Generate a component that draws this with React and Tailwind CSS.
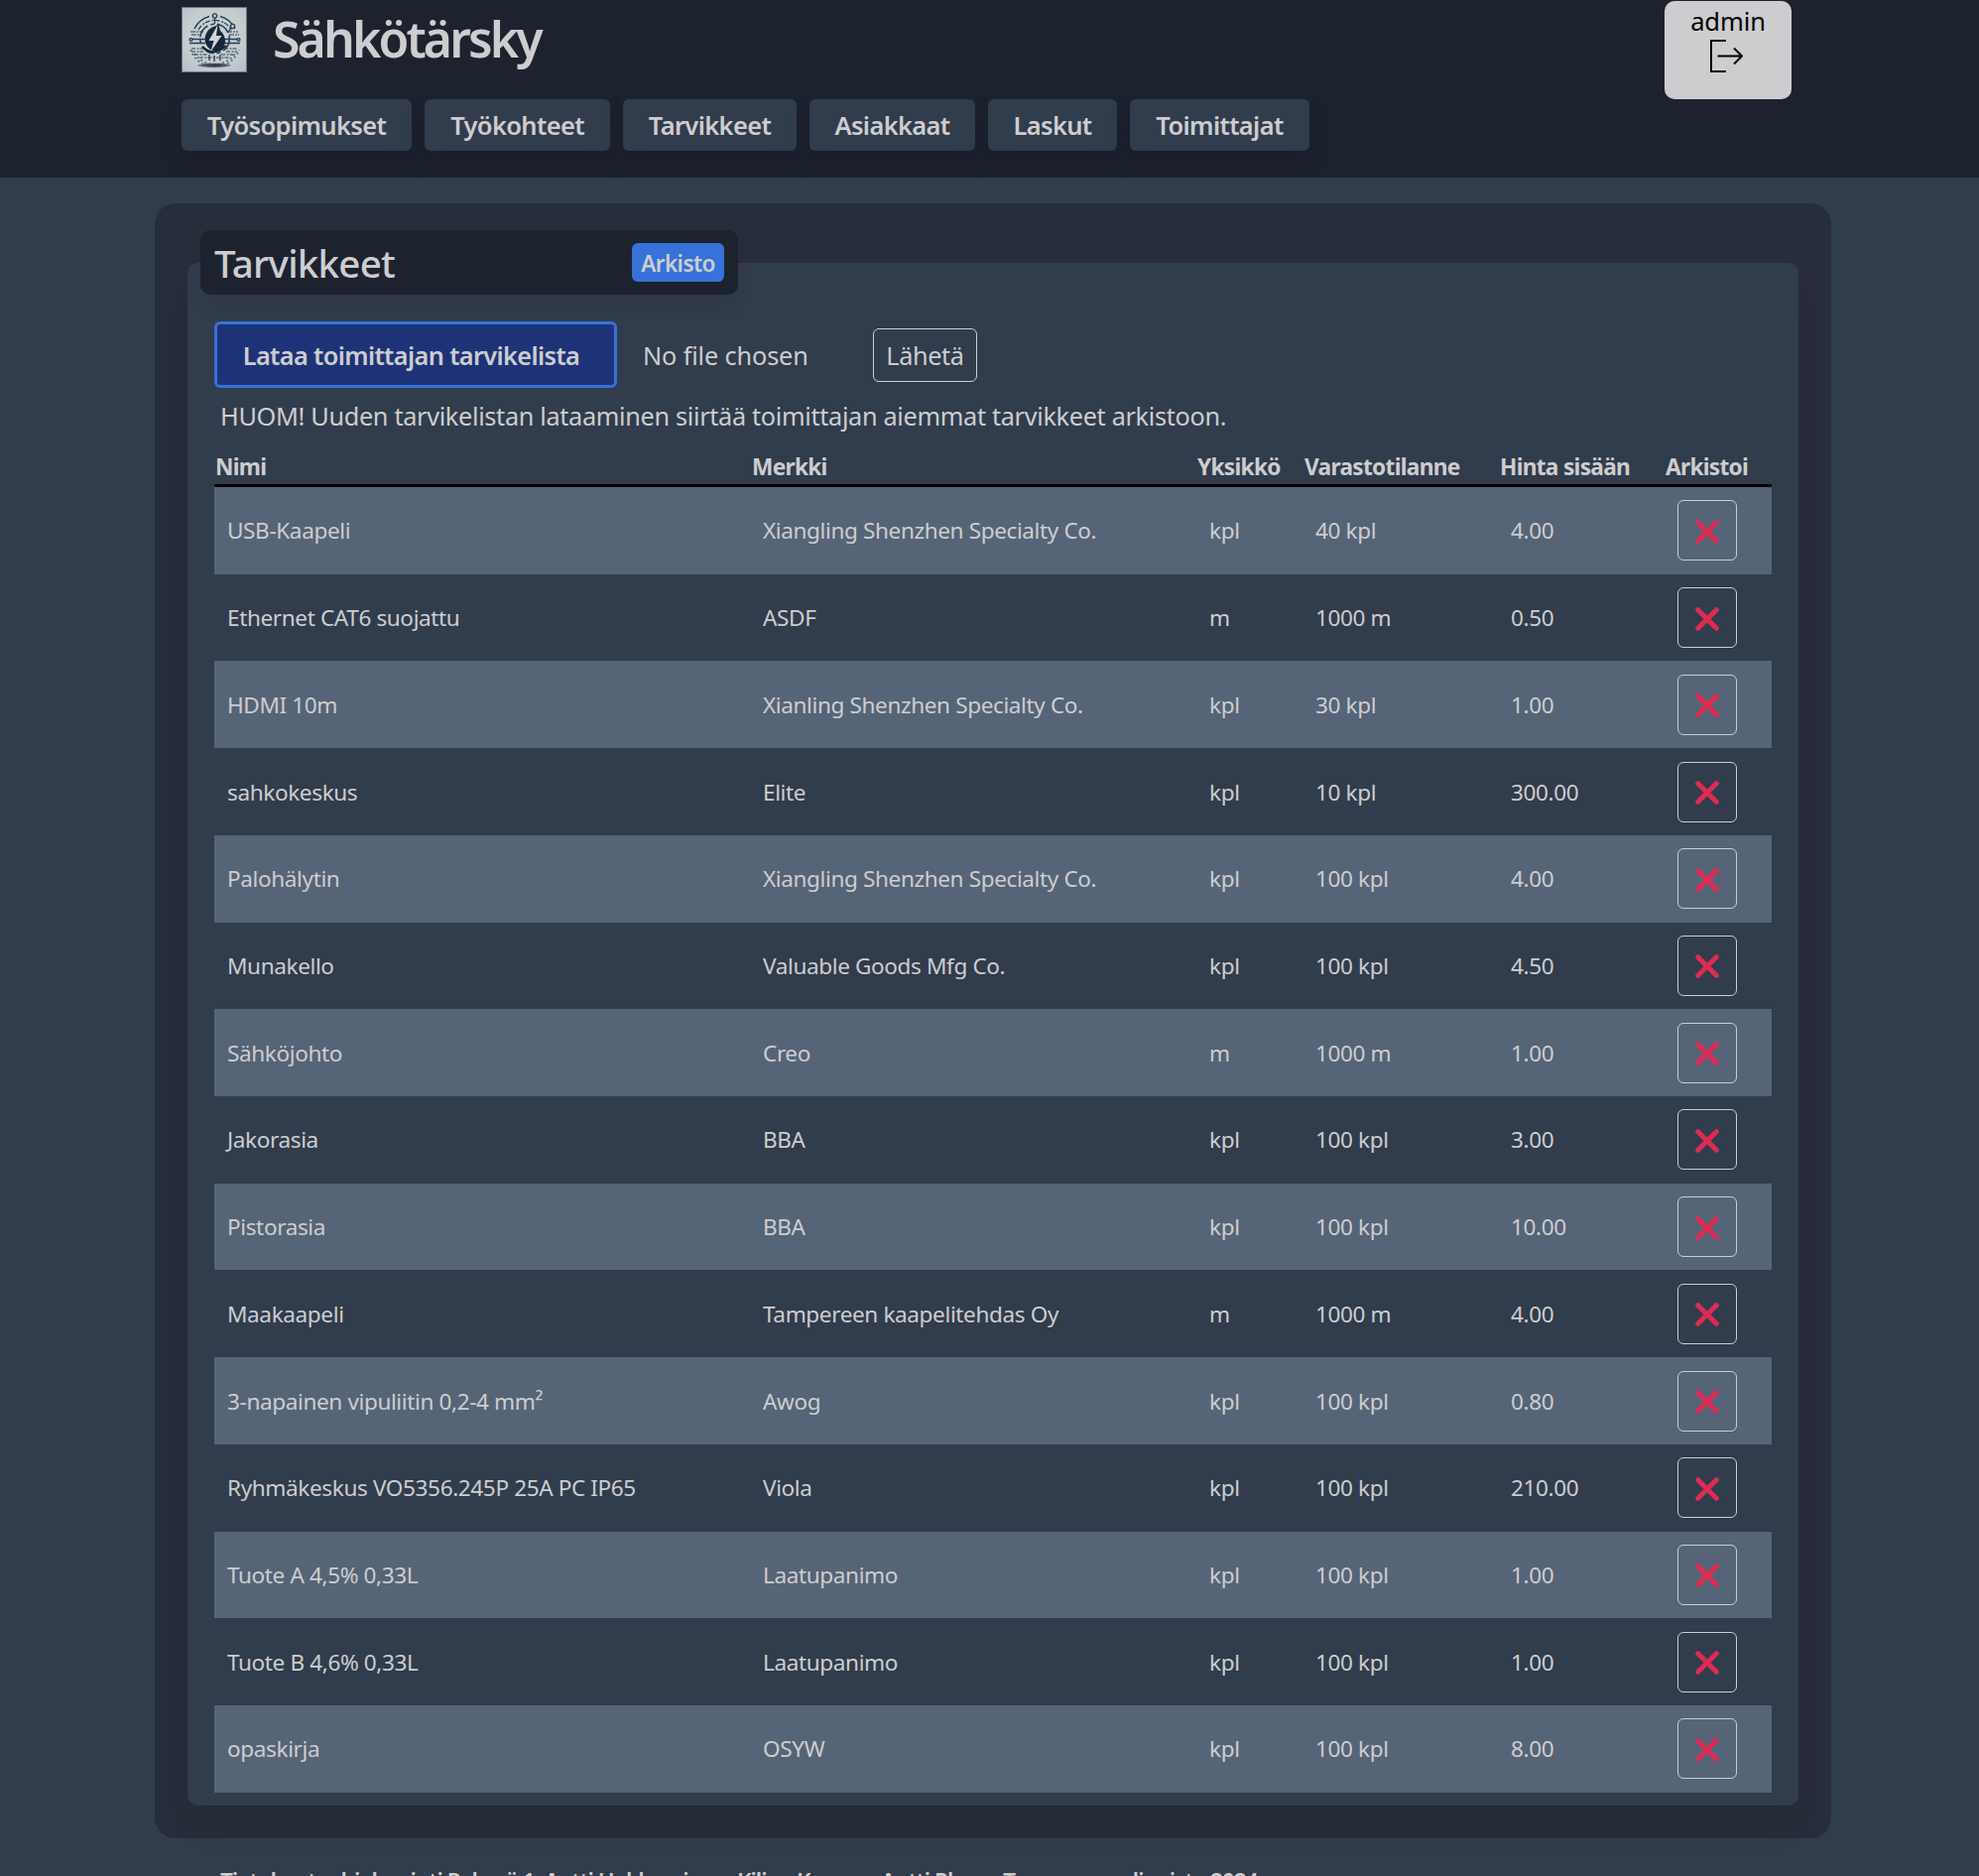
import React from 'react';

const NAV = [
  ['Työsopimukset', 'w-[232px]'],
  ['Työkohteet', 'w-[187px]'],
  ['Tarvikkeet', 'w-[175px]'],
  ['Asiakkaat', 'w-[167px]'],
  ['Laskut', 'w-[130px]'],
  ['Toimittajat', 'w-[181px]'],
];

const HEADERS = ['Nimi', 'Merkki', 'Yksikkö', 'Varastotilanne', 'Hinta sisään', 'Arkistoi'];

const ROWS = [
  ['USB-Kaapeli', 'Xiangling Shenzhen Specialty Co.', 'kpl', '40 kpl', '4.00'],
  ['Ethernet CAT6 suojattu', 'ASDF', 'm', '1000 m', '0.50'],
  ['HDMI 10m', 'Xianling Shenzhen Specialty Co.', 'kpl', '30 kpl', '1.00'],
  ['sahkokeskus', 'Elite', 'kpl', '10 kpl', '300.00'],
  ['Palohälytin', 'Xiangling Shenzhen Specialty Co.', 'kpl', '100 kpl', '4.00'],
  ['Munakello', 'Valuable Goods Mfg Co.', 'kpl', '100 kpl', '4.50'],
  ['Sähköjohto', 'Creo', 'm', '1000 m', '1.00'],
  ['Jakorasia', 'BBA', 'kpl', '100 kpl', '3.00'],
  ['Pistorasia', 'BBA', 'kpl', '100 kpl', '10.00'],
  ['Maakaapeli', 'Tampereen kaapelitehdas Oy', 'm', '1000 m', '4.00'],
  ['3-napainen vipuliitin 0,2-4 mm²', 'Awog', 'kpl', '100 kpl', '0.80'],
  ['Ryhmäkeskus VO5356.245P 25A PC IP65', 'Viola', 'kpl', '100 kpl', '210.00'],
  ['Tuote A 4,5% 0,33L', 'Laatupanimo', 'kpl', '100 kpl', '1.00'],
  ['Tuote B 4,6% 0,33L', 'Laatupanimo', 'kpl', '100 kpl', '1.00'],
  ['opaskirja', 'OSYW', 'kpl', '100 kpl', '8.00'],
];

const HEAD_COLS = 'grid grid-cols-[541px_449px_108px_197px_167px_107px]';
const ROW_COLS = 'grid grid-cols-[540px_450px_107px_197px_168px_108px]';

function Logo() {
  return (
    <svg viewBox="0 0 66 66" className="h-[66px] w-[66px]">
      <defs>
        <radialGradient id="plate" cx="50%" cy="45%" r="75%">
          <stop offset="0" stopColor="#cdd0cd" />
          <stop offset="0.6" stopColor="#c6ccce" />
          <stop offset="1" stopColor="#b2bec6" />
        </radialGradient>
        <radialGradient id="ground">
          <stop offset="0" stopColor="#25303c" />
          <stop offset="0.7" stopColor="#4d5b67" />
          <stop offset="1" stopColor="#8d99a2" />
        </radialGradient>
      </defs>
      <rect x="0.5" y="0.5" width="65" height="65" fill="url(#plate)" stroke="#6d7684" />
      <g fill="none" stroke="#24405a">
        <path d="M13 22A23.5 23.5 0 0 1 28 9.500M39 9.500A23.500 23.500 0 0 1 54 22" strokeWidth="1.600" />
        <path d="M17 23A19 19 0 0 1 50 23" strokeWidth="1.300" strokeDasharray="5 2 2 1" />
        <circle cx="33.500" cy="32" r="14.800" strokeWidth="1.600" strokeDasharray="14 3 4 3" />
        <path d="M9 43A26 26 0 0 0 58 43M13 47A25 25 0 0 0 54 47" strokeWidth="1.800" strokeDasharray="2 2.500" stroke="#5e7485" />
        <path d="M10 42H24M10 45H22M13 48H27M43 42H57M45 45H56M40 48H54M18 51H49" strokeDasharray="4 1.500 2 1" />
        <path d="M9 25H22M10 28H20M46 25H57M48 28H58" strokeDasharray="5 1 2 1" />
        <path d="M8 32.500H24M8 36.500H24M43 32.500H59M43 36.500H59" strokeWidth="1.600" />
        <path d="M33.500 10V17M51 21L46 26M28 48V54M33 49V55M39 48V54" strokeWidth="1.300" />
      </g>
      <g fill="#c6ccce" stroke="#24405a" strokeWidth="1.400">
        <circle cx="33.500" cy="9" r="2.100" />
        <circle cx="51.500" cy="19.500" r="2.100" />
        <circle cx="9.500" cy="33" r="1.400" />
        <circle cx="57.500" cy="33" r="1.400" />
      </g>
      <path d="M35 19C21 22 20 40 32 44C46 46 47 30 39 24L37 16Z" fill="#16283c" />
      <path d="M21 40Q32 51 45 39" fill="none" stroke="#16283c" strokeWidth="2" />
      <path d="M36.500 18L27.500 34H32.500L29.500 45L40.500 29H35Z" fill="#d2d5d3" />
      <ellipse cx="33" cy="58.800" rx="17" ry="2.300" fill="url(#ground)" />
    </svg>
  );
}

function LogoutIcon() {
  return (
    <svg viewBox="0 0 34 34" className="mr-1 h-[34px] w-[34px]" fill="none" stroke="#000" strokeWidth="2">
      <path d="M17 2H2V33H17" />
      <path d="M8.500 17.500H33M25 9.500L33 17.500L25 25.500" />
    </svg>
  );
}

function Cross() {
  return (
    <svg viewBox="0 0 24 24" className="mt-0.5 h-6 w-6" fill="none" stroke="#dc2c54" strokeWidth="5" strokeLinecap="round">
      <path d="M2.700 2.700L21.300 21.300M21.300 2.700L2.700 21.300" />
    </svg>
  );
}

export default function App() {
  return (
    <div className="h-[1891px] w-[1995px] overflow-hidden bg-[#313c4c] font-['Noto_Sans','Open_Sans',sans-serif] text-[#cdcdcf]">
      <header className="flex h-[179px] justify-between bg-[#1d222f] pl-[183px] pr-[189px]">
        <div>
          <div className="flex h-[100px] items-start pt-[7px]">
            <Logo />
            <h1 className="ml-[26px] mt-[-3px] whitespace-nowrap text-[50px] font-semibold leading-[70px] tracking-[-2.900px]">Sähkötärsky</h1>
          </div>
          <nav className="flex gap-[13px]">
            {NAV.map(([label, w]) => (
              <a key={label} className={`${w} h-[52px] whitespace-nowrap rounded-md bg-[#313c4c] text-center text-[25.500px] font-semibold leading-[53px] tracking-[-0.650px] shadow-[0_13px_20px_-4px_rgba(27,27,38,0.6)]`}>
                {label}
              </a>
            ))}
          </nav>
        </div>
        <div className="mt-px flex h-[99px] w-32 flex-col items-center rounded-[10px] bg-[#cdcdcf] text-black">
          <span className="h-[38px] text-[25.500px] leading-[40px] tracking-[-0.100px]">admin</span>
          <LogoutIcon />
        </div>
      </header>

      <main className="ml-[156px] mt-[26px] h-[1648px] w-[1690px] rounded-[21px] bg-[#272d3a] px-[33px] pt-[27px]">
        <div className="relative z-10 ml-[13px] flex h-[65px] w-[542px] items-center justify-between rounded-[10px] bg-[#1d222f] pl-[14px] pr-[14px] shadow-[0_13px_20px_-4px_rgba(0,0,0,0.07)]">
          <h2 className="whitespace-nowrap text-[38.500px] font-medium leading-[60px] tracking-[-0.750px]">Tarvikkeet</h2>
          <a className="h-[39px] w-[93px] rounded-md bg-[#3672d9] text-center text-[22.500px] font-semibold leading-[41px] tracking-[-0.550px]">Arkisto</a>
        </div>
        <section className="-mt-8 h-[1555px] rounded-[10px] bg-[#313c4c] pl-[27px] pt-[59px] shadow-[0_26px_33px_-6px_rgba(0,0,0,0.08)]">
          <div className="flex h-[67px] items-center whitespace-nowrap text-[25.300px]">
            <button className="h-[67px] w-[406px] rounded-md border-[3px] border-[#3672d9] bg-[#1e3377] pr-[9px] pt-0.5 text-center font-semibold tracking-[-0.620px]">Lataa toimittajan tarvikelista</button>
            <span className="ml-[26px] w-[232px] pt-0.5 tracking-[-0.150px]">No file chosen</span>
            <button className="h-[54px] w-[105px] rounded-md border border-[#cdcdcf] pt-0.5 tracking-[-0.400px]">Lähetä</button>
          </div>
          <p className="ml-1.5 h-[61px] whitespace-nowrap text-[25.300px] leading-[57px] tracking-[-0.340px]">HUOM! Uuden tarvikelistan lataaminen siirtää toimittajan aiemmat tarvikkeet arkistoon.</p>
          <div className="w-[1570px]">
            <div className={`${HEAD_COLS} h-[39px] border-b-[3px] border-black pl-px text-[22.700px] font-bold leading-[37px] tracking-[-0.720px]`}>
              {HEADERS.map((h) => <span key={h} className="whitespace-nowrap">{h}</span>)}
            </div>
            {ROWS.map((row, i) => (
              <div key={i} className={`${ROW_COLS} h-[87.730px] items-center pl-[13px] text-[22.600px] tracking-[-0.400px] ${i % 2 ? '' : 'bg-[#566477]'}`}>
                {row.map((c, j) => <span key={j} className="whitespace-nowrap pt-px">{c}</span>)}
                <button className="flex h-[61px] w-[60px] items-center justify-center rounded-md border border-[#cdcdcf]"><Cross /></button>
              </div>
            ))}
          </div>
        </section>
      </main>
      <footer className="ml-[222px] mt-[26px] whitespace-nowrap text-[22.500px] font-semibold leading-[36px] tracking-[-0.970px]">
        Tietokantaohjelmointi Ryhmä 1: Antti Hakkarainen, Kilian Kangas, Antti Pham, Tampereen yliopisto 2024
      </footer>
    </div>
  );
}
